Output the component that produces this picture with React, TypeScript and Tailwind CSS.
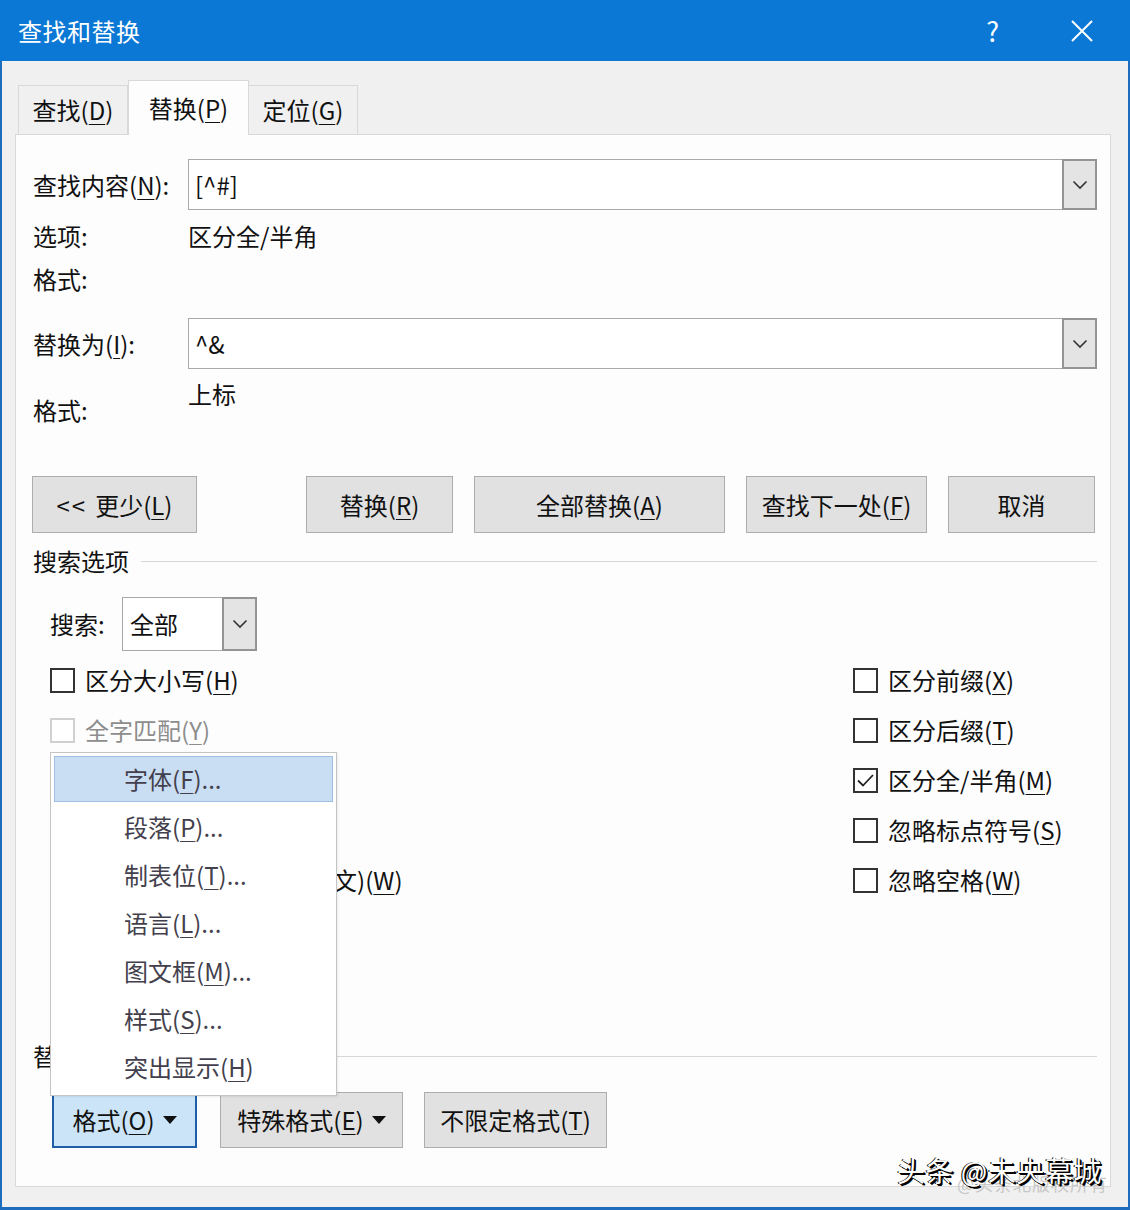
import React from "react";

const U = ({ children }: { children: React.ReactNode }) => (
  <span className="underline decoration-1 underline-offset-[4px]">{children}</span>
);

const Chevron = () => (
  <svg width="16" height="10" viewBox="0 0 16 10" fill="none">
    <path d="M1.5 1.5 L8 8 L14.5 1.5" stroke="#333" strokeWidth="1.6" />
  </svg>
);

const Tri = () => (
  <svg width="14" height="8" viewBox="0 0 14 8" className="ml-[8px]">
    <path d="M0 0 H14 L7 8 Z" fill="#111" />
  </svg>
);

function Combo({ value }: { value: string }) {
  return (
    <div className="flex-1 h-[51px] flex border border-[#a9a9a9] bg-white">
      <div className="flex-1 flex items-center pl-[6px] text-[24px] text-[#111]">{value}</div>
      <div className="w-[35px] -my-px -mr-px border-2 border-[#949494] bg-[#e4e4e4] flex items-center justify-center">
        <Chevron />
      </div>
    </div>
  );
}

function Btn({ w, children, className = "" }: { w: string; children: React.ReactNode; className?: string }) {
  return (
    <div
      className={`${w} h-[57px] border border-[#adadad] bg-[#e1e1e1] flex items-center justify-center text-[24px] text-[#111] ${className}`}
    >
      {children}
    </div>
  );
}

function Check({
  label,
  checked = false,
  disabled = false,
  hidden = false,
}: {
  label: React.ReactNode;
  checked?: boolean;
  disabled?: boolean;
  hidden?: boolean;
}) {
  return (
    <div className={`h-[50px] flex items-center ${hidden ? "invisible" : ""}`}>
      <div
        className={`w-[25px] h-[25px] border-2 ${disabled ? "border-[#d0d0d0]" : "border-[#333]"} bg-white flex items-center justify-center`}
      >
        {checked && (
          <svg width="19" height="15" viewBox="0 0 19 15" fill="none">
            <path d="M2 7.5 L7 12.5 L17 2" stroke="#222" strokeWidth="1.8" />
          </svg>
        )}
      </div>
      <span className={`ml-[10px] text-[24px] whitespace-nowrap ${disabled ? "text-[#8d8d8d]" : "text-[#111]"}`}>{label}</span>
    </div>
  );
}

const menuItems: { t: string; k: string; tail: string }[] = [
  { t: "字体(", k: "F", tail: ")..." },
  { t: "段落(", k: "P", tail: ")..." },
  { t: "制表位(", k: "T", tail: ")..." },
  { t: "语言(", k: "L", tail: ")..." },
  { t: "图文框(", k: "M", tail: ")..." },
  { t: "样式(", k: "S", tail: ")..." },
  { t: "突出显示(", k: "H", tail: ")" },
];

export default function App() {
  return (
    <div className="relative w-[1130px] h-[1210px] flex flex-col bg-[#f0f0f0] font-['Noto_Sans_CJK_SC','Microsoft_YaHei',sans-serif] text-[#111] overflow-hidden">
      {/* Title bar */}
      <div className="h-[61px] shrink-0 bg-[#0a78d4] flex items-center pl-[18px] text-white">
        <span className="text-[24px] tracking-[0.5px]">查找和替换</span>
        <span className="ml-auto mr-[72px] text-[27px] leading-none">?</span>
        <svg width="22" height="22" viewBox="0 0 22 22" className="mr-[37px]">
          <path d="M1 1 L21 21 M21 1 L1 21" stroke="#fff" strokeWidth="2" />
        </svg>
      </div>

      {/* Body */}
      <div className="flex-1 flex flex-col border-x-2 border-b-[3px] border-[#1d6cbd] pl-[13px] pr-[17px] pt-[19px] pb-[20px]">
        {/* Tabs */}
        <div className="flex items-end pl-[3px] h-[55px] relative z-10 -mb-px">
          <div className="w-[110px] h-[49px] mb-px border border-b-0 border-[#d9d9d9] bg-[#f0f0f0] flex items-center justify-center text-[24px]">
            查找(<U>D</U>)
          </div>
          <div className="w-[121px] h-[55px] border border-b-0 border-[#d9d9d9] bg-[#fdfdfd] flex items-center justify-center text-[24px]">
            替换(<U>P</U>)
          </div>
          <div className="w-[109px] h-[49px] mb-px border border-b-0 border-l-0 border-[#d9d9d9] bg-[#f0f0f0] flex items-center justify-center text-[24px]">
            定位(<U>G</U>)
          </div>
        </div>

        {/* Panel */}
        <div className="flex-1 border border-[#d9d9d9] bg-[#fdfdfd] pl-[17px] pr-[13px] flex flex-col text-[24px]">
          {/* find */}
          <div className="mt-[24px] flex items-center">
            <div className="w-[155px]">
              查找内容(<U>N</U>):
            </div>
            <Combo value="[^#]" />
          </div>
          <div className="h-[52px] flex items-center">
            <div className="w-[155px]">选项:</div>
            <div>区分全/半角</div>
          </div>
          <div className="h-[34px] flex items-center">
            <div className="w-[155px]">格式:</div>
          </div>

          {/* replace */}
          <div className="mt-[22px] flex items-center">
            <div className="w-[155px]">
              替换为(<U>I</U>):
            </div>
            <Combo value="^&" />
          </div>
          <div className="h-[62px] flex items-start leading-[30px]">
            <div className="w-[155px] mt-[26px]">格式:</div>
            <div className="mt-[10px]">上标</div>
          </div>

          {/* buttons */}
          <div className="mt-[45px] flex -ml-px">
            <Btn w="w-[165px]">
              <span className="tracking-[2px] mr-[8px]">&lt;&lt;</span>更少(<U>L</U>)
            </Btn>
            <Btn w="w-[147px]" className="ml-[109px]">
              替换(<U>R</U>)
            </Btn>
            <Btn w="w-[251px]" className="ml-[21px]">
              全部替换(<U>A</U>)
            </Btn>
            <Btn w="w-[181px]" className="ml-[21px]">
              查找下一处(<U>F</U>)
            </Btn>
            <Btn w="w-[147px]" className="ml-[21px]">
              取消
            </Btn>
          </div>

          {/* search options header */}
          <div className="h-[56px] flex items-center">
            <span>搜索选项</span>
            <div className="flex-1 h-px bg-[#d7d7d7] ml-[12px]" />
          </div>

          {/* search select */}
          <div className="mt-[8px] ml-[17px] flex items-center">
            <div className="w-[72px]">搜索:</div>
            <div className="w-[135px] h-[54px] flex border border-[#a9a9a9] bg-white">
              <div className="flex-1 flex items-center pl-[7px]">全部</div>
              <div className="w-[35px] -my-px -mr-px border-2 border-[#949494] bg-[#e4e4e4] flex items-center justify-center">
                <Chevron />
              </div>
            </div>
          </div>

          {/* checkboxes */}
          <div className="mt-[4px] ml-[17px] flex">
            <div className="w-[803px] flex flex-col">
              <Check label={<>区分大小写(<U>H</U>)</>} />
              <Check label={<>全字匹配(<U>Y</U>)</>} disabled />
              <Check label={<>使用通配符(<U>U</U>)</>} hidden />
              <Check label={<>同音(英文)(<U>K</U>)</>} hidden />
              <Check label={<>查找单词的所有形式(英文)(<U>W</U>)</>} />
            </div>
            <div className="flex flex-col">
              <Check label={<>区分前缀(<U>X</U>)</>} />
              <Check label={<>区分后缀(<U>T</U>)</>} />
              <Check label={<>区分全/半角(<U>M</U>)</>} checked />
              <Check label={<>忽略标点符号(<U>S</U>)</>} />
              <Check label={<>忽略空格(<U>W</U>)</>} />
            </div>
          </div>

          {/* replace section */}
          <div className="mt-[131px] h-[40px] flex items-center">
            <span>替换</span>
            <div className="flex-1 h-px bg-[#d7d7d7] ml-[12px]" />
          </div>
          <div className="mt-[16px] flex ml-[19px]">
            <div className="w-[145px] h-[56px] border-2 border-[#1c5fa8] bg-[#cce4f7] flex items-center justify-center">
              格式(<U>O</U>)
              <Tri />
            </div>
            <div className="w-[183px] h-[56px] ml-[23px] border border-[#adadad] bg-[#e1e1e1] flex items-center justify-center">
              特殊格式(<U>E</U>)
              <Tri />
            </div>
            <div className="w-[183px] h-[56px] ml-[21px] border border-[#adadad] bg-[#e1e1e1] flex items-center justify-center">
              不限定格式(<U>T</U>)
            </div>
          </div>
        </div>
      </div>

      {/* Dropdown menu overlay */}
      <div className="absolute left-[50px] top-[752px] w-[287px] border border-[#c4c4c4] bg-white p-[3px] shadow-[1px_1px_2px_rgba(0,0,0,0.08)] z-20">
        {menuItems.map((m, i) => (
          <div
            key={i}
            className={`h-[46px] mb-[2px] flex items-center pl-[69px] text-[24px] text-[#433f4d] ${
              i === 0 ? "bg-[#c9ddf3] border border-[#9fbfe3]" : "border border-transparent"
            }`}
          >
            {m.t}
            <U>{m.k}</U>
            {m.tail}
          </div>
        ))}
      </div>

      {/* Watermark overlay */}
      <div className="absolute left-[957px] top-[1170px] text-[18px] text-[#c8c8c8] tracking-[1px] z-20 whitespace-nowrap">
        @头条北版权所有
      </div>
      <div className="absolute left-[897px] top-[1149px] text-[28px] tracking-[0.5px] text-white z-30 whitespace-nowrap [text-shadow:1px_1px_0_#000,2px_2px_0_#000,-1px_0_0_#000]">
        头条 @未央幕城
      </div>
    </div>
  );
}
